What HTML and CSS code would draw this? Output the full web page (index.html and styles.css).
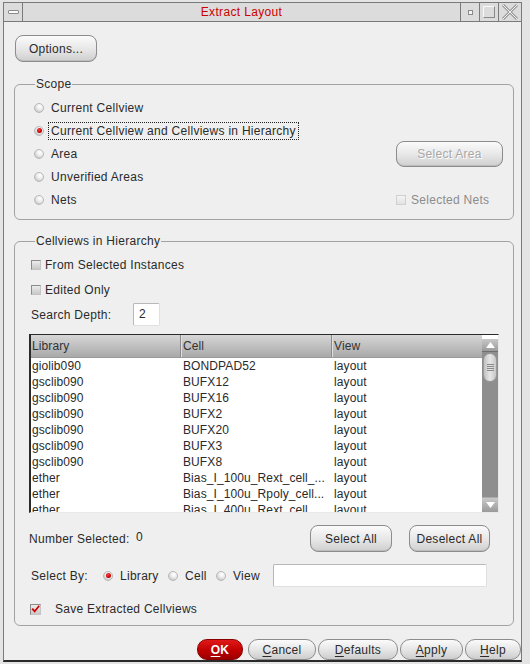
FILE: index.html
```html
<!DOCTYPE html>
<html>
<head>
<meta charset="utf-8">
<link rel="stylesheet" href="styles.css">
</head>
<body>
<div class="win">
  <div class="titlebar">
    <div class="tb-menu"><span class="menu-bar"></span></div>
    <div class="tb-title">Extract Layout</div>
    <div class="tb-btn"><span class="min-sq"></span></div>
    <div class="tb-btn"><span class="max-sq"></span></div>
    <div class="tb-btn tb-close">
      <svg width="18" height="16" viewBox="0 0 18 16"><path d="M2 1 L16 15 M16 1 L2 15" stroke="#9a9a9a" stroke-width="3" fill="none"/><path d="M2 1 L16 15 M16 1 L2 15" stroke="#f2f2f2" stroke-width="1" fill="none"/></svg>
    </div>
  </div>
  <div class="content">
    <div class="btn btn-options">Options...</div>

    <fieldset class="group scope">
      <legend>Scope</legend>
      <div class="row"><span class="radio"></span><span class="lbl">Current Cellview</span></div>
      <div class="row"><span class="radio on"></span><span class="lbl focus">Current Cellview and Cellviews in Hierarchy</span></div>
      <div class="row"><span class="radio"></span><span class="lbl">Area</span><span class="right"><span class="btn btn-area disabled">Select Area</span></span></div>
      <div class="row"><span class="radio"></span><span class="lbl">Unverified Areas</span></div>
      <div class="row"><span class="radio"></span><span class="lbl">Nets</span><span class="right"><span class="check dis"></span><span class="dis-text">Selected Nets</span></span></div>
    </fieldset>

    <fieldset class="group cells">
      <legend>Cellviews in Hierarchy</legend>
      <div class="crow"><span class="check"></span><span class="clbl">From Selected Instances</span></div>
      <div class="crow"><span class="check"></span><span class="clbl">Edited Only</span></div>
      <div class="crow"><span class="sd-label">Search Depth:</span><span class="input sd-input">2</span></div>

      <div class="table">
        <div class="tmain">
          <div class="thead">
            <div class="c1">Library</div><div class="c2">Cell</div><div class="c3">View</div>
          </div>
          <div class="tbody">
            <div class="tr"><div class="c1">giolib090</div><div class="c2">BONDPAD52</div><div class="c3">layout</div></div>
            <div class="tr"><div class="c1">gsclib090</div><div class="c2">BUFX12</div><div class="c3">layout</div></div>
            <div class="tr"><div class="c1">gsclib090</div><div class="c2">BUFX16</div><div class="c3">layout</div></div>
            <div class="tr"><div class="c1">gsclib090</div><div class="c2">BUFX2</div><div class="c3">layout</div></div>
            <div class="tr"><div class="c1">gsclib090</div><div class="c2">BUFX20</div><div class="c3">layout</div></div>
            <div class="tr"><div class="c1">gsclib090</div><div class="c2">BUFX3</div><div class="c3">layout</div></div>
            <div class="tr"><div class="c1">gsclib090</div><div class="c2">BUFX8</div><div class="c3">layout</div></div>
            <div class="tr"><div class="c1">ether</div><div class="c2">Bias_I_100u_Rext_cell_...</div><div class="c3">layout</div></div>
            <div class="tr"><div class="c1">ether</div><div class="c2">Bias_I_100u_Rpoly_cell...</div><div class="c3">layout</div></div>
            <div class="tr"><div class="c1">ether</div><div class="c2">Bias_I_400u_Rext_cell...</div><div class="c3">layout</div></div>
          </div>
        </div>
        <div class="sbar">
          <div class="sb-btn"><svg width="9" height="6" viewBox="0 0 9 6"><path d="M0 6 L4.5 0 L9 6 Z" fill="#fff"/></svg></div>
          <div class="sb-track"><div class="sb-thumb"><span></span><span></span><span></span><span></span></div></div>
          <div class="sb-btn"><svg width="9" height="6" viewBox="0 0 9 6"><path d="M0 0 L4.5 6 L9 0 Z" fill="#fff"/></svg></div>
        </div>
      </div>

      <div class="nrow">
        <span class="ns-label">Number Selected:</span><span class="ns-val">0</span>
        <span class="btn btn-sel">Select All</span>
        <span class="btn btn-desel">Deselect All</span>
      </div>

      <div class="srow">
        <span class="sb-label">Select By:</span>
        <span class="radio on"></span><span class="slbl s-lib">Library</span>
        <span class="radio"></span><span class="slbl s-cell">Cell</span>
        <span class="radio"></span><span class="slbl s-view">View</span>
        <span class="input sel-input"></span>
      </div>

      <div class="saverow">
        <span class="check checked"><svg width="11" height="10" viewBox="0 0 11 10"><path d="M1.5 4.5 L4.5 8 L10 1" stroke="#d00000" stroke-width="2.2" fill="none"/></svg></span>
        <span class="save-lbl">Save Extracted Cellviews</span>
      </div>
    </fieldset>

    <div class="actions">
      <span class="pill ok"><u>O</u>K</span>
      <span class="pill w-cancel"><u>C</u>ancel</span>
      <span class="pill w-def"><u>D</u>efaults</span>
      <span class="pill w-apply"><u>A</u>pply</span>
      <span class="pill w-help"><u>H</u>elp</span>
    </div>
  </div>
</div>
</body>
</html>
```

FILE: styles.css
```css
* { box-sizing: border-box; }
html, body { margin: 0; padding: 0; }
body {
  width: 530px; height: 664px; overflow: hidden;
  background: #e4e4e4;
  font-family: "Liberation Sans", Arial, sans-serif;
  font-size: 12px;
  letter-spacing: 0.28px;
  color: #2a2a2a;
}
.win {
  margin: 2px 0 0 3px;
  width: 519px; height: 660px;
  border: 1px solid #7a7a7a;
  border-bottom: 2px solid #2a2a2a;
  background: #efefef;
  display: flex; flex-direction: column;
}
.titlebar {
  height: 19px; flex: none;
  display: flex;
  background: #dcdcdc;
  border-bottom: 1px solid #7a7a7a;
}
.tb-menu {
  width: 19px; border-right: 1px solid #7a7a7a;
  display: flex; align-items: center; justify-content: center;
}
.menu-bar {
  width: 11px; height: 4px; background: #fafafa;
  border: 1px solid #8a8a8a; border-radius: 1px;
}
.tb-title {
  flex: 1; text-align: center; color: #cc0000;
  line-height: 18px; font-size: 12px; letter-spacing: 0.35px;
}
.tb-btn {
  width: 19px; border-left: 1px solid #7a7a7a;
  display: flex; align-items: center; justify-content: center;
}
.tb-close { width: 23px; }
.min-sq { width: 5px; height: 5px; background: #f4f4f4; border: 1px solid #8a8a8a; }
.max-sq { width: 12px; height: 12px; border: 1px solid; border-color: #fafafa #8a8a8a #8a8a8a #fafafa; }

.content {
  flex: 1;
  padding: 13px 7px 0 10px;
  display: flex; flex-direction: column;
}
.btn {
  display: inline-flex; align-items: center; justify-content: center;
  border: 1px solid #8c8c8c; border-radius: 8px;
  background: linear-gradient(#fbfbfb, #e6e6e6 55%, #cfcfcf);
  box-shadow: inset 0 -1px 0 #bdbdbd;
  color: #2a2a2a;
}
.btn-options { width: 82px; height: 27px; margin-left: 1px; }

.group {
  margin: 0; padding: 0;
  border: 1px solid #a2a2a2; border-radius: 6px;
  min-width: 0;
}
.group legend {
  margin-left: 20px; padding: 0 1px;
  line-height: 14px; color: #2a2a2a;
}
.scope { margin-top: 15px; padding: 5px 0 8px 0; }
.row { height: 23px; display: flex; align-items: center; padding-left: 19px; }
.radio {
  width: 10px; height: 10px; border-radius: 50%; flex: none;
  background: radial-gradient(circle at 62% 30%, #ffffff 0%, #eeeeee 40%, #b4b4b4 100%);
  border: 1px solid #b8b8b8;
  position: relative;
}
.radio.on::after {
  content: ""; position: absolute; left: 1.5px; top: 1.5px;
  width: 5px; height: 5px; border-radius: 50%;
  background: radial-gradient(circle at 40% 35%, #ff4040, #c80000 60%, #900000);
}
.lbl { margin-left: 4px; padding: 1px 2px; border: 1px solid transparent; line-height: 14px; }
.lbl.focus { border: 1px dotted #222; }
.right { margin-left: auto; width: 117px; display: flex; align-items: center; }
.btn-area { width: 107px; height: 26px; }
.disabled { color: #a8a8a8; text-shadow: 1px 1px 0 #ffffff; }
.check {
  width: 10px; height: 10px; flex: none;
  border: 1px solid; border-color: #8c8c8c #c4c4c4 #c4c4c4 #8c8c8c;
  background: linear-gradient(#ececec, #c8c8c8);
  display: inline-flex; align-items: center; justify-content: center;
}
.check.dis { border-color: #d0d0d0; background: linear-gradient(#f4f4f4, #e2e2e2); }
.dis-text { margin-left: 5px; color: #8c8c8c; }

.cells { margin-top: 14px; padding: 4px 0 8px 0; }
.crow { height: 25px; display: flex; align-items: center; padding-left: 16px; }
.clbl { margin-left: 4px; }
.sd-label { width: 102px; }
.input {
  background: #fff; border: 1px solid; border-color: #b8b8b8 #e0e0e0 #e0e0e0 #b8b8b8;
  border-radius: 2px;
}
.sd-input { width: 27px; height: 23px; padding-left: 5px; line-height: 21px; }

.table {
  margin: 7px 0 0 14px;
  width: 470px; height: 179px;
  border: 1px solid; border-color: #2a2a2a #e8e8e8 #e8e8e8 #2a2a2a;
  border-left-width: 2px;
  display: flex; background: #fff;
  letter-spacing: 0.1px;
}
.tmain { flex: 1; overflow: hidden; }
.thead {
  height: 23px; display: flex;
  background: linear-gradient(#d6d6d6, #a9a9a9);
  border-bottom: 1px solid #9a9a9a;
}
.thead > div { line-height: 22px; color: #333; }
.thead .c1, .thead .c2 { border-right: 1px solid #8a8a8a; box-shadow: 1px 0 0 #e0e0e0; }
.c1 { width: 150px; flex: none; padding-left: 1px; }
.c2 { width: 151px; flex: none; padding-left: 2px; }
.c3 { flex: 1; padding-left: 2px; }
.tr { height: 16px; display: flex; line-height: 16px; white-space: nowrap; }
.tr > div { overflow: hidden; }
.sbar { width: 16px; flex: none; display: flex; flex-direction: column; background: #8e8e8e; margin-top: 4px; }
.sb-btn {
  height: 13px; flex: none;
  background: linear-gradient(#c8c8c8, #9a9a9a);
  display: flex; align-items: center; justify-content: center;
  border-bottom: 1px solid #6e6e6e;
}
.sb-btn:last-child { height: 15px; border-bottom: none; border-top: 1px solid #aaa; }
.sb-track { flex: 1; padding-top: 1px; }
.sb-thumb {
  height: 29px; margin: 0 1px; border-radius: 7px;
  background: linear-gradient(90deg, #c2c2c2, #e6e6e6 50%, #c8c8c8);
  border: 1px solid #9a9a9a;
  display: flex; flex-direction: column; align-items: center; justify-content: center; gap: 1px;
}
.sb-thumb span { width: 7px; height: 1px; background: #8a8a8a; }

.nrow { height: 27px; margin-top: 12px; display: flex; align-items: center; padding-left: 14px; }
.ns-label { width: 107px; flex: none; }
.ns-val { width: 174px; flex: none; margin-top: -3px; }
.btn-sel { width: 82px; height: 27px; }
.btn-desel { width: 81px; height: 27px; margin-left: 17px; }

.srow { height: 23px; margin-top: 12px; display: flex; align-items: center; padding-left: 16px; }
.sb-label { width: 72px; flex: none; }
.slbl { margin-left: 7px; flex: none; }
.s-lib { width: 48px; }
.s-cell { width: 31px; }
.s-view { width: 40px; }
.sel-input { width: 214px; height: 23px; }

.saverow { height: 16px; margin-top: 14px; display: flex; align-items: center; padding-left: 15px; }
.check.checked { width: 11px; height: 11px; }
.save-lbl { margin-left: 14px; }

.actions {
  margin-top: 13px; height: 21px;
  display: flex; justify-content: flex-end;
  margin-right: -7px;
}
.pill {
  height: 21px; border-radius: 10px;
  border: 1px solid #8c8c8c;
  background: linear-gradient(#fbfbfb, #e4e4e4 55%, #cdcdcd);
  display: inline-flex; align-items: center; justify-content: center;
  color: #2a2a2a; margin-left: 2px;
}
.pill u { text-decoration-thickness: 1px; text-underline-offset: 2px; }
.ok { width: 46px; background: linear-gradient(#e01a1a, #c00000 55%, #9c0000); border-color: #8a0000; color: #fff; font-weight: bold; margin-right: 3px; }
.w-cancel { width: 68px; }
.w-def { width: 80px; }
.w-apply { width: 63px; }
.w-help { width: 56px; }
```
